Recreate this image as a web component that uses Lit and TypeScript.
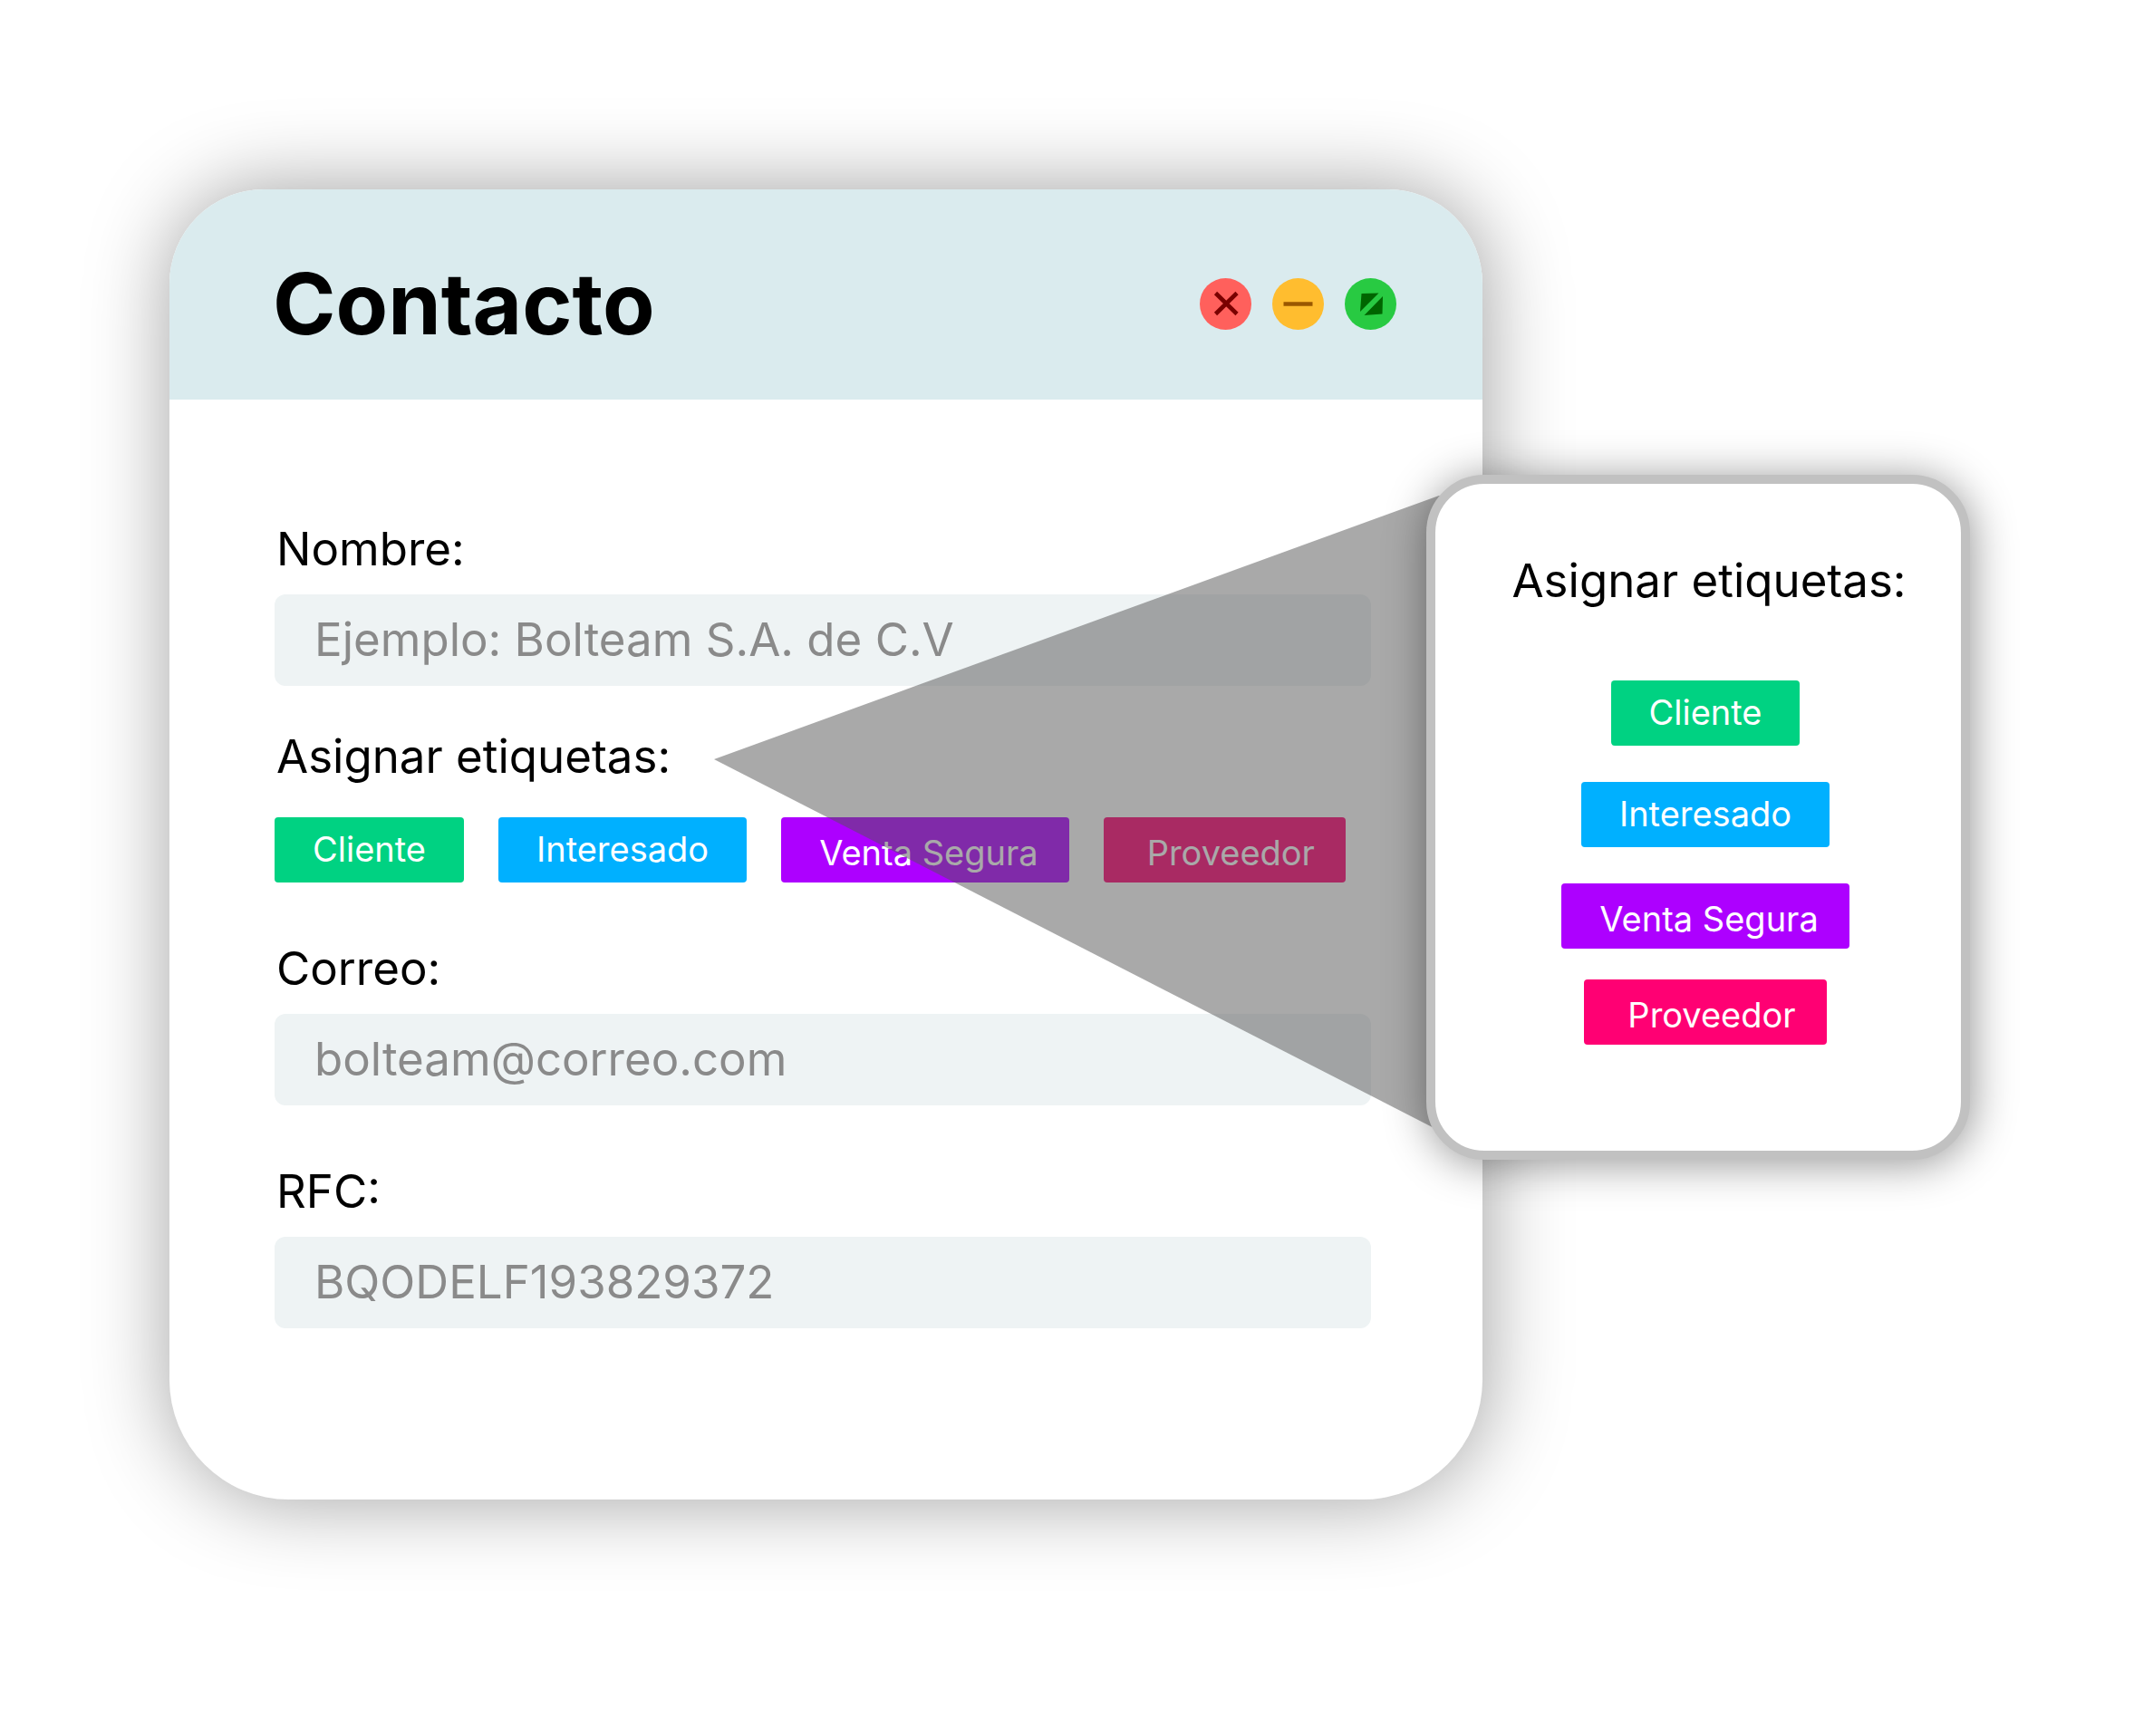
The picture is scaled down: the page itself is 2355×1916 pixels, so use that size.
import { LitElement, html, css, svg } from "lit";
import { customElement, property } from "lit/decorators.js";
import { classMap } from "lit/directives/class-map.js";

interface Tag {
  name: string;
  tone: string;
}

interface Field {
  id: string;
  label: string;
  type: string;
  hint: string;
}

const TAGS: Tag[] = [
  { name: "Cliente", tone: "green" },
  { name: "Interesado", tone: "blue" },
  { name: "Venta Segura", tone: "purple" },
  { name: "Proveedor", tone: "pink" },
];

const NAME: Field = { id: "nombre", label: "Nombre:", type: "text", hint: "Ejemplo: Bolteam S.A. de C.V" };
const MAIL: Field = { id: "correo", label: "Correo:", type: "email", hint: "bolteam@correo.com" };
const RFC: Field = { id: "rfc", label: "RFC:", type: "text", hint: "BQODELF193829372" };

@customElement("tag-list")
export class TagList extends LitElement {
  @property({ type: Boolean, reflect: true }) stacked = false;

  static styles = css`
    :host {
      display: block;
    }
    .list {
      display: flex;
      flex-wrap: wrap;
      gap: 38px;
    }
    .stacked {
      flex-direction: column;
      flex-wrap: nowrap;
      align-items: center;
      gap: 40px;
    }
    .tag {
      box-sizing: border-box;
      height: 72px;
      padding: 0 42px 2px;
      border: 0;
      border-radius: 4px;
      color: #fff;
      font: 400 38px/64px Inter, "Open Sans", sans-serif;
      white-space: nowrap;
      cursor: pointer;
    }
    .green {
      background: #00d282;
    }
    .blue {
      background: #00b0ff;
    }
    .purple {
      padding: 6px 34px 0 42px;
      background: #ad00ff;
    }
    .pink {
      padding: 6px 34px 0 48px;
      background: #ff0073;
    }
    .stacked .pink {
      margin-top: -6px;
    }
  `;

  render() {
    return html`
      <div class=${classMap({ list: true, stacked: this.stacked })}>
        ${TAGS.map((t) => html`<button type="button" class="tag ${t.tone}">${t.name}</button>`)}
      </div>
    `;
  }
}

@customElement("app-root")
export class AppRoot extends LitElement {
  static styles = css`
    :host {
      display: block;
      min-height: 100vh;
      box-sizing: border-box;
      padding: 209px 181px 209px 187px;
      overflow: hidden;
      background: #fff;
      color: #000;
      font-family: Inter, "Open Sans", sans-serif;
    }
    .stage {
      position: relative;
      margin-right: 538px;
    }
    .window {
      border-radius: 104px 104px 132px 132px;
      background: #fff;
      box-shadow: 2px 0 92px rgba(0, 0, 0, 0.38);
    }
    .bar {
      display: flex;
      align-items: center;
      justify-content: space-between;
      box-sizing: border-box;
      height: 232px;
      padding: 20px 95px 0 114px;
      border-radius: 104px 104px 0 0;
      background: #daebee;
    }
    .title {
      margin: 0;
      font-size: 94px;
      line-height: 104px;
      font-weight: 700;
    }
    .controls {
      display: flex;
      gap: 23px;
    }
    .control {
      width: 57px;
      height: 57px;
      padding: 0;
      border: 0;
      background: none;
      cursor: pointer;
    }
    .control svg {
      display: block;
      width: 100%;
      height: 100%;
    }
    .form {
      display: flex;
      flex-direction: column;
      gap: 63px;
      padding: 133px 123px 189px 116px;
    }
    .group {
      display: flex;
      flex-direction: column;
      gap: 46px;
    }
    .field {
      display: flex;
      flex-direction: column;
      gap: 18px;
    }
    .tags {
      gap: 35px;
    }
    .label {
      margin: 0;
      padding-left: 2px;
      font-size: 51px;
      line-height: 64px;
      font-weight: 400;
    }
    .input {
      box-sizing: border-box;
      width: 100%;
      height: 101px;
      padding: 0 44px 2px;
      border: 0;
      border-radius: 12px;
      outline: 0;
      background: #eef3f4;
      color: #000;
      font: 400 51px/64px Inter, "Open Sans", sans-serif;
    }
    .input::placeholder {
      color: #8a8a8a;
      opacity: 1;
    }
    .beam {
      position: absolute;
      top: 338px;
      left: calc(100% - 848px);
      width: 812px;
      height: 718px;
      pointer-events: none;
    }
    .callout {
      position: absolute;
      top: 315px;
      left: calc(100% - 62px);
      box-sizing: border-box;
      width: 600px;
      padding: 75px 0 117px 16px;
      border: 10px solid #c1c1c1;
      border-radius: 64px;
      background: #fff;
      box-shadow: 2px 4px 48px rgba(0, 0, 0, 0.42);
    }
    .heading {
      margin: 0 0 78px;
      padding-left: 8px;
      font-size: 51px;
      line-height: 64px;
      font-weight: 400;
      text-align: center;
      white-space: nowrap;
    }
  `;

  private field(f: Field) {
    return html`
      <div class="field">
        <label class="label" for=${f.id}>${f.label}</label>
        <input class="input" id=${f.id} type=${f.type} placeholder=${f.hint} />
      </div>
    `;
  }

  private control(name: string, color: string, glyph: unknown) {
    return html`
      <button type="button" class="control" aria-label=${name}>
        <svg viewBox="0 0 57 57" aria-hidden="true">
          <circle cx="28.5" cy="28.5" r="28.5" fill=${color} />
          ${glyph}
        </svg>
      </button>
    `;
  }

  render() {
    return html`
      <main class="stage">
        <section class="window">
          <header class="bar">
            <h1 class="title">Contacto</h1>
            <div class="controls">
              ${this.control("Cerrar", "#ff605c", svg`<path d="M17.5 16.5 41 39.5M41 16.5 17.5 39.5" stroke="#7a0000" stroke-width="4.6" />`)}
              ${this.control("Minimizar", "#ffbd2f", svg`<path d="M12.5 28.5H44.5" stroke="#9a5800" stroke-width="4.4" />`)}
              ${this.control("Ampliar", "#28ca42", svg`<path d="M18.5 17 37.5 16.5 17 37Z M42 20 41.5 39.5 21.5 41Z" fill="#006500" />`)}
            </div>
          </header>
          <form class="form">
            <div class="group">
              ${this.field(NAME)}
              <div class="field tags" role="group" aria-labelledby="etiquetas">
                <p class="label" id="etiquetas">Asignar etiquetas:</p>
                <tag-list></tag-list>
              </div>
            </div>
            ${this.field(MAIL)} ${this.field(RFC)}
          </form>
        </section>
        <svg class="beam" viewBox="0 0 812 718" aria-hidden="true">
          <path d="M0 291 800 0H812V707Z" fill="#545454" fill-opacity="0.5" />
        </svg>
        <aside class="callout">
          <h2 class="heading">Asignar etiquetas:</h2>
          <tag-list stacked></tag-list>
        </aside>
      </main>
    `;
  }
}
